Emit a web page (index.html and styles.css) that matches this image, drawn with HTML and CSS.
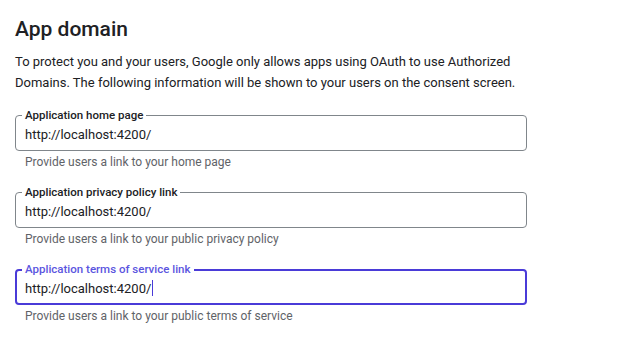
FILE: index.html
```html
<!DOCTYPE html>
<html lang="en">
<head>
    <meta charset="UTF-8">
    <title>App domain</title>
    <link rel="stylesheet" href="styles.css">
</head>
<body>
    <div class="section">
        <h2 class="section-title">App domain</h2>
        <p class="section-desc">To protect you and your users, Google only allows apps using OAuth to use Authorized Domains. The following information will be shown to your users on the consent screen.</p>

        <div class="form-group">
            <div class="field">
                <span class="field-label">Application home page</span>
                <div class="field-value">http://localhost:4200/</div>
            </div>
            <div class="field-hint">Provide users a link to your home page</div>
        </div>

        <div class="form-group">
            <div class="field">
                <span class="field-label">Application privacy policy link</span>
                <div class="field-value">http://localhost:4200/</div>
            </div>
            <div class="field-hint">Provide users a link to your public privacy policy</div>
        </div>

        <div class="form-group">
            <div class="field active">
                <span class="field-label">Application terms of service link</span>
                <div class="field-value">http://localhost:4200/<span class="caret"></span></div>
            </div>
            <div class="field-hint">Provide users a link to your public terms of service</div>
        </div>
    </div>
</body>
</html>
```

FILE: styles.css
```css
/* Página base */
body {
    margin: 0;
    padding: 0 15px;
    font-family: Roboto, Arial, sans-serif;
    color: #202124;
    background: #ffffff;
}
.section {
    width: 512px;
    padding-top: 15px;
}
.section-title {
    font-size: 21px;
    font-weight: 500;
    line-height: 28px;
    margin: 0 0 8px 0;
}
.section-desc {
    font-size: 13px;
    line-height: 21px;
    margin: 0 0 22px 0;
}
.form-group {
    margin-bottom: 22px;
}
.field {
    position: relative;
    height: 36px;
    border: 1px solid #80868b;
    border-radius: 4px;
    box-sizing: border-box;
    display: flex;
    align-items: center;
    padding: 0 9px;
}
.field.active {
    border: 2px solid #4a3bd8;
    padding: 0 8px;
}
.field-label {
    position: absolute;
    top: -8px;
    left: 6px;
    padding: 0 3px;
    background: #ffffff;
    font-size: 11.5px;
    font-weight: 500;
    line-height: 14px;
    color: #202124;
}
.field.active .field-label {
    top: -9px;
    left: 5px;
    color: #5b55e0;
}
.field-value {
    font-size: 13px;
    color: #202124;
    display: flex;
    align-items: center;
    padding-top: 2px;
}
.caret {
    display: inline-block;
    width: 1px;
    height: 16px;
    background: #4a3bd8;
    margin-left: 1px;
}
.field-hint {
    font-size: 12px;
    color: #5f6368;
    margin-top: 3px;
    padding-left: 10px;
    line-height: 16px;
}
```
